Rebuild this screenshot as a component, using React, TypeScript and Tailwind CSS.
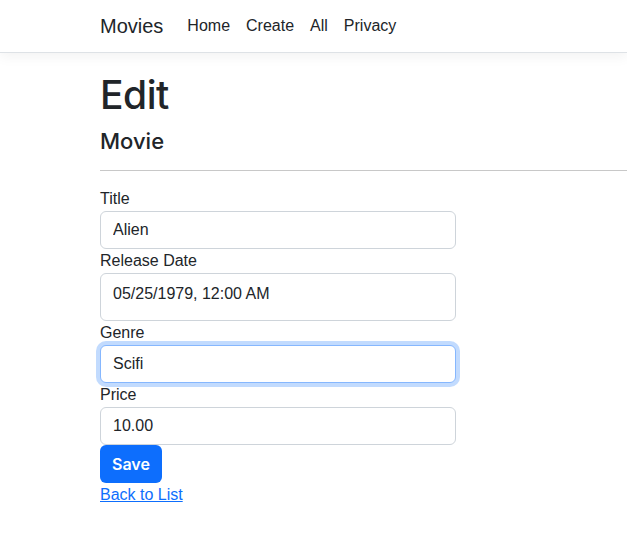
export default function App() {
  const font = { fontFamily: '"Liberation Sans", Arial, sans-serif' };
  const heading = { fontFamily: 'Inter, "Liberation Sans", Arial, sans-serif' };
  const inputBase =
    "block w-[356px] rounded-[6px] border border-[#ced4da] bg-white px-3 text-[16px] text-[#212529] outline-none";

  return (
    <div className="min-h-[559px] bg-white text-[#212529]" style={font}>
      {/* Navbar */}
      <nav className="h-[53px] border-b border-[#dee2e6] bg-white shadow-[0_4px_12px_rgba(0,0,0,0.05)]">
        <div className="flex h-[52px] items-center pl-[100px]">
          <a className="mr-4 text-[20px] leading-[30px] text-[#212529]">Movies</a>
          <ul className="flex text-[16px] leading-6">
            <li className="px-2 text-[#212529]">Home</li>
            <li className="px-2 text-[#212529]">Create</li>
            <li className="px-2 text-[#212529]">All</li>
            <li className="px-2 text-[#212529]">Privacy</li>
          </ul>
        </div>
      </nav>

      <main className="pl-[100px] pt-[18px]">
        <h1 className="mb-2 text-[39px] font-medium leading-[48px] tracking-[-0.5px]" style={heading}>
          Edit
        </h1>
        <h4 className="text-[22px] font-medium leading-[29px]" style={heading}>
          Movie
        </h4>
        <hr className="mb-4 mt-[14px] border-t border-[#c8c8c8]" />

        <form className="flex flex-col text-[16px] leading-6">
          <label className="block">Title</label>
          <input className={`${inputBase} h-[38px]`} defaultValue="Alien" readOnly />

          <label className="block">Release Date</label>
          <input
            className={`${inputBase} h-[48px] pb-[7px]`}
            defaultValue="05/25/1979, 12:00 AM"
            readOnly
          />

          <label className="block">Genre</label>
          <input
            className="block h-[38px] w-[356px] rounded-[6px] border border-[#86b7fe] bg-white px-3 text-[16px] text-[#212529] shadow-[0_0_0_4px_rgba(13,110,253,0.25)] outline-none"
            defaultValue="Scifi"
            readOnly
          />

          <label className="block">Price</label>
          <input className={`${inputBase} h-[38px]`} defaultValue="10.00" readOnly />

          <div>
            <button
              type="button"
              className="h-[38px] rounded-[6px] bg-[#0d6efd] px-3 text-[16px] font-semibold text-white"
              style={heading}
            >
              Save
            </button>
          </div>
        </form>

        <div className="text-[16px] leading-6">
          <a className="text-[#0d6efd] underline">Back to List</a>
        </div>
      </main>
    </div>
  );
}
